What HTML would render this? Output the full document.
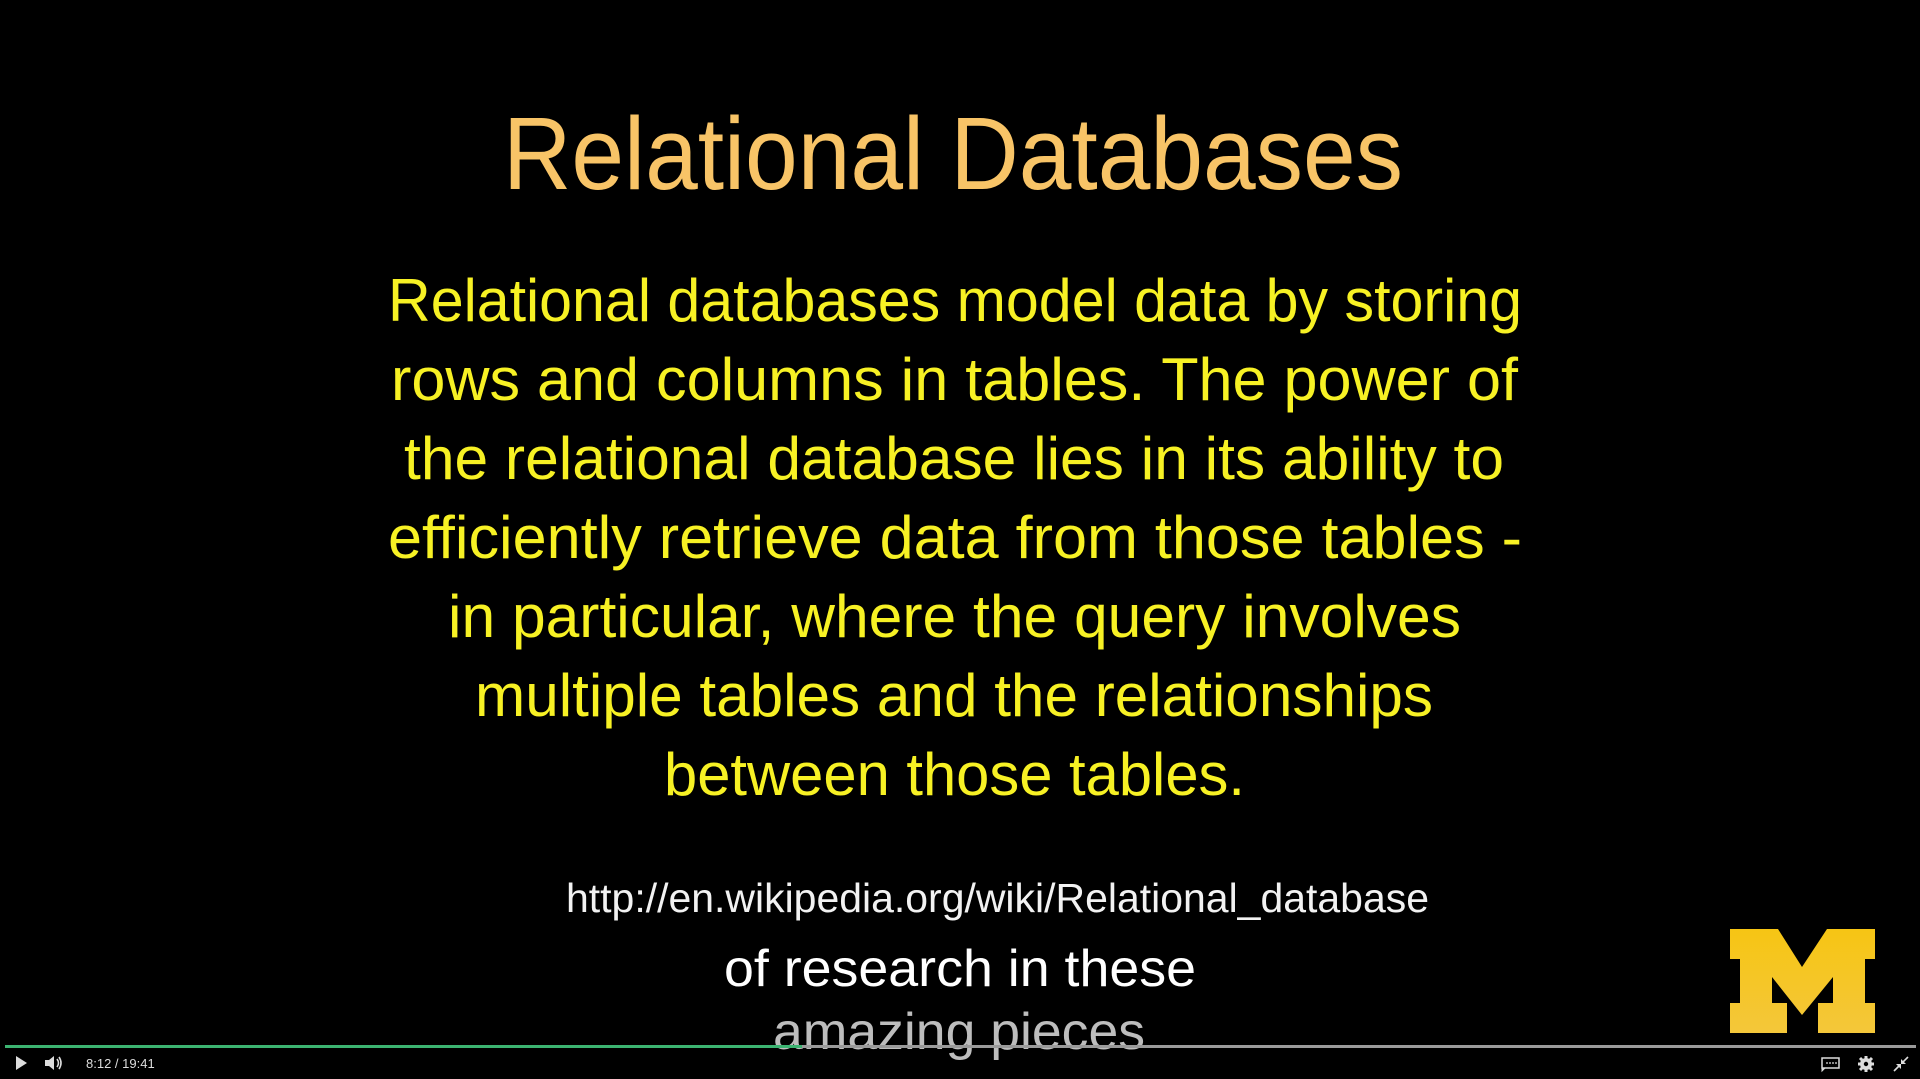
<!DOCTYPE html>
<html><head><meta charset="utf-8"><style>
html,body{margin:0;padding:0;background:#000;width:1920px;height:1079px;overflow:hidden}
svg{display:block}
</style></head><body>
<svg width="1920" height="1079" viewBox="0 0 1920 1079" xmlns="http://www.w3.org/2000/svg">
<defs><linearGradient id="mg" x1="0" y1="0" x2="0" y2="1"><stop offset="0" stop-color="#f6c514"/><stop offset="1" stop-color="#f4c73a"/></linearGradient></defs>
<rect width="1920" height="1079" fill="#000"/>
<g font-family="Liberation Sans, sans-serif">
<text x="503" y="189" font-size="103" fill="#f8c467" textLength="900" lengthAdjust="spacingAndGlyphs">Relational Databases</text>
<g font-size="60" fill="#f7f124">
<text x="388" y="321" textLength="1134" lengthAdjust="spacingAndGlyphs">Relational databases model data by storing</text>
<text x="391" y="400" textLength="1127" lengthAdjust="spacingAndGlyphs">rows and columns in tables.  The power of</text>
<text x="404" y="479" textLength="1100" lengthAdjust="spacingAndGlyphs">the relational database lies in its ability to</text>
<text x="388" y="558" textLength="1134" lengthAdjust="spacingAndGlyphs">efficiently retrieve data from those tables -</text>
<text x="448" y="637" textLength="1013" lengthAdjust="spacingAndGlyphs">in particular, where the query involves</text>
<text x="475" y="716" textLength="958" lengthAdjust="spacingAndGlyphs">multiple tables and the relationships</text>
<text x="664" y="795" textLength="581" lengthAdjust="spacingAndGlyphs">between those tables.</text>
</g>
<text x="566" y="912" font-size="41" fill="#f2f2f2" textLength="863" lengthAdjust="spacingAndGlyphs">http://en.wikipedia.org/wiki/Relational_database</text>
<text x="724" y="986" font-size="52" fill="#fff" textLength="472" lengthAdjust="spacingAndGlyphs">of research in these</text>
<text x="773" y="1049" font-size="52" fill="#bdbdbd" textLength="372" lengthAdjust="spacingAndGlyphs">amazing pieces</text>
</g>
<!-- M logo -->
<path transform="translate(1730,929)" fill="url(#mg)" d="M0 0H48L72 38L97 0H145V30H135V74H145V104H88V74H103V48L72 86L42 48V74H57V104H0V74H10V30H0Z"/>
<!-- progress -->
<rect x="5" y="1045" width="1911" height="3" fill="#9a9a9a"/>
<rect x="5" y="1045" width="797" height="3" fill="#3cb371"/>
<!-- controls -->
<path d="M16 1056L27 1063L16 1070Z" fill="#ddd"/>
<path d="M45 1060H49L54 1056V1070L49 1066H45Z" fill="#ddd"/>
<path d="M57 1059Q60 1063 57 1067M59 1057Q63 1063 59 1069" stroke="#ddd" stroke-width="1.6" fill="none"/>
<text x="86" y="1068" font-family="Liberation Sans, sans-serif" font-size="13" fill="#ddd">8:12  /  19:41</text>
<rect x="1822" y="1058" width="17" height="10" fill="none" stroke="#ddd" stroke-width="1.5"/>
<path d="M1822 1068V1071L1825 1068" fill="#ddd" stroke="#ddd"/>
<path d="M1826 1063h2M1829 1063h2M1832 1063h2M1835 1063h2" stroke="#ddd" stroke-width="1.3"/>
<circle cx="1866" cy="1064" r="6" fill="#ddd"/>
<g stroke="#ddd" stroke-width="3"><path d="M1866 1056V1072M1858 1064H1874M1860 1058L1872 1070M1872 1058L1860 1070"/></g>
<circle cx="1866" cy="1064" r="2.2" fill="#000"/>
<path d="M1894 1071L1900 1065M1908 1057L1902 1063" stroke="#ddd" stroke-width="1.6"/>
<path d="M1896 1064H1901V1069Z M1906 1064H1901V1059Z" fill="#ddd"/>
</svg>
</body></html>
